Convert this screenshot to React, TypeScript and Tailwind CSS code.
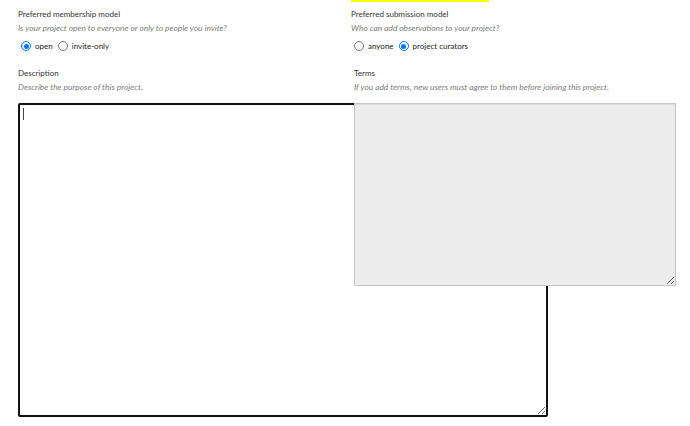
import React from "react";

function Label({ children }: { children: React.ReactNode }) {
  return <div className="h-[12px] text-[8px] leading-[12px] text-[#333]">{children}</div>;
}

function Hint({ children }: { children: React.ReactNode }) {
  return (
    <div className="mt-[2px] h-[12px] text-[8.4px] leading-[12px] italic text-[#7d7d7d]">{children}</div>
  );
}

function Radio({ checked = false, className = "" }: { checked?: boolean; className?: string }) {
  if (checked) {
    return (
      <span
        className={
          "flex h-[10px] w-[10px] shrink-0 items-center justify-center rounded-full border-[1.5px] border-[#0075ff] bg-white " +
          className
        }
      >
        <span className="h-[5px] w-[5px] rounded-full bg-[#0075ff]" />
      </span>
    );
  }
  return (
    <span
      className={
        "block h-[10px] w-[10px] shrink-0 rounded-full border border-[#767676] bg-white " + className
      }
    />
  );
}

export default function App() {
  return (
    <div className="h-[426px] w-[690px] overflow-hidden bg-white font-[Lato,'Liberation_Sans',sans-serif] text-[#333]">
      {/* Row 1 */}
      <div className="flex items-start pl-[18px]">
        <div className="w-[333px] shrink-0 pt-[8px]">
          <Label>Preferred membership model</Label>
          <Hint>Is your project open to everyone or only to people you invite?</Hint>
          <div className="mt-[6px] flex h-[12px] items-center text-[8px] leading-[12px] text-[#222]">
            <Radio checked className="ml-[3px]" />
            <span className="ml-[4px]">open</span>
            <Radio className="ml-[5px]" />
            <span className="ml-[4px]">invite-only</span>
          </div>
        </div>
        <div className="flex-1">
          <div className="h-[2px] w-[138px] bg-[#ffff00]" />
          <div className="pt-[6px]">
            <Label>Preferred submission model</Label>
            <Hint>Who can add observations to your project?</Hint>
            <div className="mt-[6px] flex h-[12px] items-center text-[8px] leading-[12px] text-[#222]">
              <Radio className="ml-[3px]" />
              <span className="ml-[4px]">anyone</span>
              <Radio checked className="ml-[5px]" />
              <span className="ml-[4px]">project curators</span>
            </div>
          </div>
        </div>
      </div>

      {/* Row 2 */}
      <div className="mt-[15px] flex items-start pl-[18px]">
        <div className="w-[336px] shrink-0">
          <Label>Description</Label>
          <Hint>Describe the purpose of this project.</Hint>
          <textarea
            className="mt-[10px] block h-[314px] w-[530px] rounded-[2px] border-2 border-[#111] bg-white outline-none"
            defaultValue=""
          />
        </div>
        <div className="relative flex-1">
          <Label>Terms</Label>
          <Hint>If you add terms, new users must agree to them before joining this project.</Hint>
          <textarea
            className="mt-[10px] block h-[183px] w-[322px] border border-[#c6c6c6] bg-[#ececec] shadow-[inset_0_1px_1px_rgba(0,0,0,0.06)] outline-none"
            defaultValue=""
          />
          <span className="absolute left-[-331px] top-[41px] h-[12px] w-[1px] bg-[#444]" />
        </div>
      </div>
    </div>
  );
}
